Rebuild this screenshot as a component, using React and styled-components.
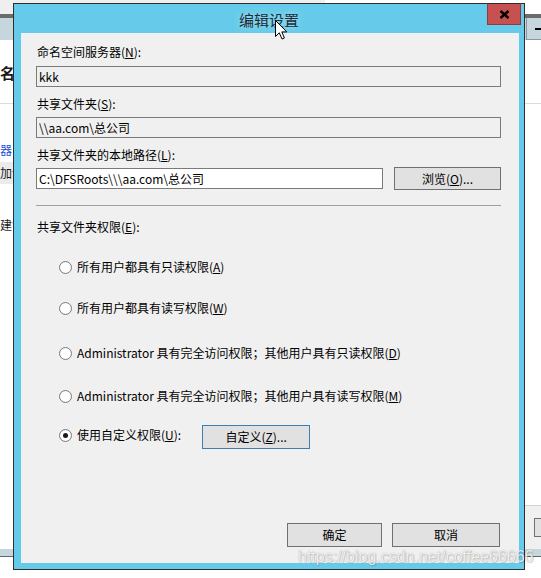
import styled, { createGlobalStyle } from "styled-components"

const GlobalStyle = createGlobalStyle`
  html, body {
    margin: 0;
    padding: 0;
    background: #ffffff;
  }
  body {
    font-family: "Noto Sans CJK SC", "Noto Sans", sans-serif;
  }
  * {
    box-sizing: border-box;
  }
`

const options = [
  { text: "所有用户都具有只读权限(", key: "A", top: 24 },
  { text: "所有用户都具有读写权限(", key: "W", top: 25 },
  { text: "Administrator 具有完全访问权限；其他用户具有只读权限(", key: "D", top: 29 },
  { text: "Administrator 具有完全访问权限；其他用户具有读写权限(", key: "M", top: 27 },
]

const App = () => {
  return (
    <>
      <GlobalStyle />
      <Screen>
        {/* window behind the dialog */}
        <ParentWindow>
          <TopStrip />
          <DarkBar />
          <ToolBand>
            <MinBox>
              <Dash />
            </MinBox>
          </ToolBand>
          <Content>
            <LeftPane>
              <Fragment $top={24} $bold $size={15} $line={18}>
                名称
              </Fragment>
              <Rule $top={21} />
              <Fragment $top={39} $blue>
                器
              </Fragment>
              <Band $top={5}>
                <Fragment>加设置</Fragment>
              </Band>
              <Fragment $top={34}>建命名</Fragment>
            </LeftPane>
            <div />
            <RightPane>
              <Rule $top={63} />
              <SideFooter>
                <SideButton />
              </SideFooter>
            </RightPane>
          </Content>
          <StatusBand />
        </ParentWindow>

        <Dialog>
          <TitleBar>
            <Title>编辑设置</Title>
            <CloseButton>
              <svg width="11" height="9" viewBox="0 0 11 9">
                <path d="M1.5 1 L9.5 8 M9.5 1 L1.5 8" stroke="#000" strokeWidth="2.4" />
              </svg>
            </CloseButton>
          </TitleBar>

          <Client>
            <Label $top={11}>
              命名空间服务器(<u>N</u>):
            </Label>
            <TextBox $top={6} readOnly value="kkk" />
            <Label $top={9}>
              共享文件夹(<u>S</u>):
            </Label>
            <TextBox $top={5} readOnly value={"\\\\aa.com\\总公司"} />
            <Label $top={9}>
              共享文件夹的本地路径(<u>L</u>):
            </Label>
            <PathRow>
              <TextBox $grow value={"C:\\DFSRoots\\\\\\aa.com\\总公司"} onChange={() => {}} />
              <PushButton $w={107} $h={23}>
                浏览(<u>O</u>)...
              </PushButton>
            </PathRow>
            <Separator />
            <Label $top={13}>
              共享文件夹权限(<u>E</u>):
            </Label>

            <RadioList>
              {options.map((opt) => (
                <RadioRow key={opt.key} $top={opt.top}>
                  <RadioOption>
                    <RadioDot />
                    <RadioText>
                      {opt.text}
                      <u>{opt.key}</u>)
                    </RadioText>
                  </RadioOption>
                </RadioRow>
              ))}
              <RadioRow $top={21}>
                <RadioOption $lift>
                  <RadioDot $checked />
                  <RadioText>
                    使用自定义权限(<u>U</u>):
                  </RadioText>
                </RadioOption>
                <PushButton $w={108} $focus $gap={21}>
                  自定义(<u>Z</u>)...
                </PushButton>
              </RadioRow>
            </RadioList>

            <Footer>
              <PushButton $w={95}>确定</PushButton>
              <PushButton $w={108}>取消</PushButton>
            </Footer>
          </Client>
        </Dialog>

        <Cursor width="13" height="20" viewBox="0 0 13 20">
          <path
            d="M0.5 0.5 L0.5 16.5 L4.3 12.8 L7 19 L9.4 18 L6.8 11.9 L11.8 11.9 Z"
            fill="#ffffff"
            stroke="#000000"
            strokeWidth="1"
            strokeLinejoin="miter"
          />
        </Cursor>
        <Watermark>https://blog.csdn.net/coffee66666</Watermark>
      </Screen>
    </>
  )
}
export default App

const Screen = styled.div`
  position: relative;
  width: 541px;
  height: 578px;
  overflow: hidden;
  background: #ffffff;
`

// =========
// PARENT WINDOW
// =========

const ParentWindow = styled.div`
  display: flex;
  flex-direction: column;
  height: 100%;
`

const TopStrip = styled.div`
  height: 14px;
  background: linear-gradient(to right, #efefef 0 60%, #ffffff 60%);
`

const DarkBar = styled.div`
  height: 4px;
  background-color: #6b6b6b;
`

const ToolBand = styled.div`
  height: 22px;
  display: flex;
  justify-content: flex-end;
  background-color: #c5d6dc;
`

const MinBox = styled.div`
  width: 15px;
  display: flex;
  align-items: center;
  justify-content: flex-end;
  border-left: 1px solid #8a9aa0;
  border-bottom: 1px solid #8a9aa0;
`

const Dash = styled.span`
  width: 6px;
  height: 2px;
  background-color: #000;
`

const Content = styled.div`
  flex: 1;
  display: grid;
  grid-template-columns: 13px 1fr 16px;
`

const LeftPane = styled.div`
  display: flex;
  flex-direction: column;
  align-items: flex-start;
  white-space: nowrap;
`

const Fragment = styled.div`
  margin-top: ${(p) => p.$top || 0}px;
  font-size: ${(p) => p.$size || 12}px;
  line-height: ${(p) => p.$line || 14}px;
  font-weight: ${(p) => (p.$bold ? 700 : 400)};
  color: ${(p) => (p.$blue ? "#1a4fd6" : "#1a1a1a")};
`

const Rule = styled.div`
  align-self: stretch;
  margin-top: ${(p) => p.$top}px;
  height: 1px;
  background-color: #dcdcdc;
`

const Band = styled.div`
  align-self: stretch;
  margin-top: ${(p) => p.$top}px;
  height: 22px;
  display: flex;
  align-items: center;
  background-color: #ebebeb;
`

const RightPane = styled.div`
  display: flex;
  flex-direction: column;
  overflow: hidden;
`

const SideFooter = styled.div`
  margin-top: auto;
  height: 44px;
  padding: 12px 0 0 9px;
  border-top: 1px solid #d2d2d2;
  background-color: #f0f0f0;
`

const SideButton = styled.div`
  width: 20px;
  height: 19px;
  border: 1px solid #707070;
  background-color: #e1e1e1;
`

const StatusBand = styled.div`
  height: 8px;
  margin-bottom: 21px;
  background-color: #c5d6dc;
  border-bottom: 1px solid #5c6a70;
`

// =========
// DIALOG
// =========

const Dialog = styled.div`
  position: absolute;
  left: 13px;
  top: 3px;
  width: 512px;
  height: 567px;
  display: flex;
  flex-direction: column;
  padding: 0 5px 6px 7px;
  border: 1px solid #2e2e2e;
  background-color: #66cbea;
`

const TitleBar = styled.div`
  height: 29px;
  margin: 0 -5px 0 -7px;
  display: grid;
  grid-template-columns: 1fr auto 1fr;
  align-items: start;
`

const Title = styled.div`
  grid-column: 2;
  padding-top: 6px;
  font-size: 15px;
  line-height: 20px;
  color: #1d2c36;
  text-shadow: 0 0 6px rgba(255, 255, 255, 0.5);
`

const CloseButton = styled.div`
  grid-column: 3;
  justify-self: end;
  width: 34px;
  height: 22px;
  margin: -1px 3px 0 0;
  display: flex;
  align-items: center;
  justify-content: center;
  border: 1px solid #8e3b3b;
  border-top-color: #2e2e2e;
  background-color: #c75050;
`

const Client = styled.div`
  flex: 1;
  display: flex;
  flex-direction: column;
  padding: 0 18px 16px 15px;
  background-color: #f0f0f0;
  font-size: 12px;
  color: #000;
`

const Label = styled.div`
  margin-top: ${(p) => p.$top}px;
  padding-left: 1px;
  font-size: 12px;
  line-height: 16px;
`

const TextBox = styled.input`
  display: block;
  flex: ${(p) => (p.$grow ? "1" : "none")};
  min-width: 0;
  width: ${(p) => (p.$grow ? "auto" : "100%")};
  height: 21px;
  margin: ${(p) => p.$top || 0}px 0 0 0;
  padding: 0 2px;
  border: 1px solid #7a7a7a;
  border-radius: 0;
  background-color: ${(p) => (p.readOnly ? "#f0f0f0" : "#ffffff")};
  font-family: "Noto Sans CJK SC", sans-serif;
  font-size: 12px;
  color: #000;
  outline: none;
`

const PathRow = styled.div`
  margin-top: 4px;
  height: 23px;
  display: flex;
  align-items: center;
  gap: 11px;
`

const PushButton = styled.button`
  flex: none;
  width: ${(p) => p.$w}px;
  height: ${(p) => p.$h || 24}px;
  margin-left: ${(p) => p.$gap || 0}px;
  padding: 0;
  border: 1px solid ${(p) => (p.$focus ? "#3c7fb1" : "#707070")};
  border-radius: 0;
  background-color: #e1e1e1;
  font-family: "Noto Sans CJK SC", sans-serif;
  font-size: 12px;
  line-height: 16px;
  color: #000;
`

const Separator = styled.div`
  margin-top: 15px;
  height: 1px;
  background-color: #a0a0a0;
`

const RadioList = styled.div`
  display: flex;
  flex-direction: column;
  padding-left: 23px;
`

const RadioRow = styled.div`
  margin-top: ${(p) => p.$top}px;
  display: flex;
  align-items: center;
`

const RadioOption = styled.div`
  display: flex;
  align-items: center;
  gap: 5px;
  padding-bottom: ${(p) => (p.$lift ? 4 : 0)}px;
`

const RadioDot = styled.span`
  width: 13px;
  height: 13px;
  flex: none;
  display: flex;
  align-items: center;
  justify-content: center;
  border: 1px solid #7c7c7c;
  border-radius: 50%;
  background: radial-gradient(circle, #ffffff 55%, #e6e6e6 100%);

  &::after {
    content: "";
    width: 5px;
    height: 5px;
    border-radius: 50%;
    background-color: #1b1b1b;
    display: ${(p) => (p.$checked ? "block" : "none")};
  }
`

const RadioText = styled.span`
  font-size: 12px;
  line-height: 16px;
  white-space: nowrap;
`

const Footer = styled.div`
  margin-top: auto;
  display: flex;
  justify-content: flex-end;
  gap: 10px;
  padding-right: 1px;
`

// =========
// OVERLAYS
// =========

const Cursor = styled.svg`
  position: absolute;
  left: 275px;
  top: 20px;
`

const Watermark = styled.div`
  position: absolute;
  left: 298px;
  top: 549px;
  font-family: "Liberation Sans", Arial, sans-serif;
  font-size: 16px;
  line-height: 16px;
  color: rgba(255, 255, 255, 0.85);
  text-shadow: 0 0 1px rgba(0, 0, 0, 0.35), 1px 1px 1px rgba(0, 0, 0, 0.15);
  white-space: nowrap;
`
